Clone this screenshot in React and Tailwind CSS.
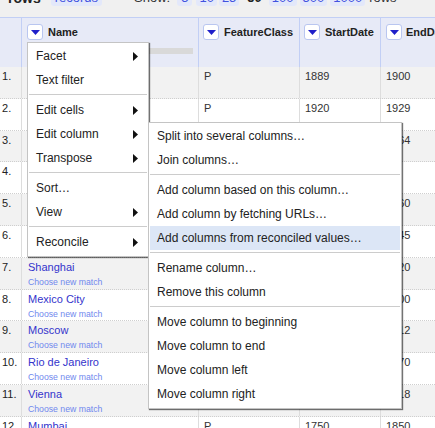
import React from "react";

const rows = [
  { name: "Tokyo", fc: "P", start: "1889", end: "1900" },
  { name: "Delhi", fc: "P", start: "1920", end: "1929" },
  { name: "Seoul", fc: "P", start: "1850", end: "1864" },
  { name: "Jakarta", fc: "P", start: "", end: "" },
  { name: "Manila", fc: "P", start: "1945", end: "1960" },
  { name: "Cairo", fc: "P", start: "1930", end: "1945" },
  { name: "Shanghai", fc: "P", start: "1900", end: "1920" },
  { name: "Mexico City", fc: "P", start: "1880", end: "1900" },
  { name: "Moscow", fc: "P", start: "1890", end: "1912" },
  { name: "Rio de Janeiro", fc: "P", start: "1950", end: "1970" },
  { name: "Vienna", fc: "P", start: "1900", end: "1918" },
  { name: "Mumbai", fc: "P", start: "1750", end: "1850" },
];

const mainMenu = [
  { label: "Facet", sub: true },
  { label: "Text filter" },
  "sep",
  { label: "Edit cells", sub: true },
  { label: "Edit column", sub: true },
  { label: "Transpose", sub: true },
  "sep",
  { label: "Sort…" },
  { label: "View", sub: true },
  "sep",
  { label: "Reconcile", sub: true },
];

const columnMenu = [
  { label: "Split into several columns…" },
  { label: "Join columns…" },
  "sep",
  { label: "Add column based on this column…" },
  { label: "Add column by fetching URLs…" },
  { label: "Add columns from reconciled values…", active: true },
  "sep",
  { label: "Rename column…" },
  { label: "Remove this column" },
  "sep",
  { label: "Move column to beginning" },
  { label: "Move column to end" },
  { label: "Move column left" },
  { label: "Move column right" },
];

const DropButton = () => (
  <span className="flex h-[16px] w-[16px] shrink-0 items-center justify-center rounded-[3px] border border-[#b9c6f0] bg-white">
    <svg width="9" height="5" viewBox="0 0 9 5">
      <polygon points="0,0 9,0 4.5,5" fill="#1f1fc9" />
    </svg>
  </span>
);

const Arrow = () => (
  <svg width="5" height="9" viewBox="0 0 5 9" className="mr-[9px]">
    <polygon points="0,0 5,4.5 0,9" fill="#111" />
  </svg>
);

const Menu = ({ items, className }) => (
  <div
    className={`absolute border border-[#c4c4c4] bg-white px-px pb-[2px] pt-px shadow-[1px_1px_1px_rgba(0,0,0,0.55)] ${className}`}
  >
    {items.map((item, i) =>
      item === "sep" ? (
        <div key={i} className="mb-[3px] mt-[2px] h-px bg-[#cccccc]" />
      ) : (
        <div
          key={i}
          className={`flex h-[24px] items-center justify-between pl-[7px] text-[12px] text-[#222] ${
            item.active ? "bg-[#dce6f6]" : ""
          }`}
        >
          <span>{item.label}</span>
          {item.sub && <Arrow />}
        </div>
      )
    )}
  </div>
);

const Badge = ({ children, className = "" }) => (
  <span className={`rounded-[3px] bg-[#e3e8fa] px-[3px] text-[#4152e0] ${className}`}>
    {children}
  </span>
);

export default function App() {
  return (
    <div
      className="relative h-[428px] w-[435px] overflow-hidden bg-white text-[#333]"
      style={{ fontFamily: '"Liberation Sans", Arial, sans-serif' }}
    >
      {/* summary bar */}
      <div className="h-[18px] overflow-hidden border-b border-[#c2cff5] bg-[#f0f0f0]">
        <div className="-mt-[10px] flex items-center whitespace-nowrap text-[13px] leading-[16px]">
          <span className="ml-[8px] text-[14px] font-bold text-[#222]">rows</span>
          <Badge className="ml-[10px] px-[4px]">records</Badge>
          <span className="ml-[32px] text-[#333]">Show:</span>
          <Badge className="ml-[7px] px-[4px]">5</Badge>
          <Badge className="ml-[4px]">10</Badge>
          <Badge className="ml-[2px]">25</Badge>
          <span className="ml-[5px] px-[3px] font-bold text-[#222]">50</span>
          <Badge className="ml-[4px]">100</Badge>
          <Badge className="ml-[3px]">500</Badge>
          <Badge className="ml-[3px]">1000</Badge>
          <span className="ml-[4px]">rows</span>
        </div>
      </div>

      {/* header */}
      <div className="flex h-[49px] bg-[#e7eaf7] text-[11px] font-bold text-[#222]">
        <div className="w-[21px] shrink-0" />
        <div className="flex w-[177px] shrink-0 flex-col border-l border-[#c2cff5] pl-[5px] pt-[6px]">
          <div className="flex items-center gap-[5px]">
            <DropButton />
            <span>Name</span>
          </div>
          <div className="mr-[5px] mt-[7px] h-[6px] bg-[#d9d9d9]" />
        </div>
        <div className="flex w-[101px] shrink-0 items-start gap-[5px] border-l border-[#c2cff5] pl-[4px] pt-[6px]">
          <DropButton />
          <span className="leading-[16px]">FeatureClass</span>
        </div>
        <div className="flex w-[81px] shrink-0 items-start gap-[5px] border-l border-[#c2cff5] pl-[4px] pt-[6px]">
          <DropButton />
          <span className="leading-[16px]">StartDate</span>
        </div>
        <div className="flex w-[80px] shrink-0 items-start gap-[4px] border-l border-[#c2cff5] pl-[5px] pt-[6px]">
          <DropButton />
          <span className="leading-[16px]">EndDate</span>
        </div>
      </div>

      {/* rows */}
      <div className="text-[11px] leading-[14px]">
        {rows.map((r, i) => (
          <div
            key={i}
            className={`flex h-[31.8px] border-b border-dotted border-[#cfcfcf] ${
              i % 2 === 0 ? "bg-[#f2f2f2]" : "bg-white"
            }`}
          >
            <div className="w-[21px] shrink-0 pl-[2px] pt-[2px] text-[#222]">{i + 1}.</div>
            <div className="w-[177px] shrink-0 border-l border-[#dddddd] pl-[6px] pt-[2px]">
              <div className="text-[#3434cc]">{r.name}</div>
              <div className="mt-px text-[8.7px] leading-[14px] text-[#7088ee]">
                Choose new match
              </div>
            </div>
            <div className="w-[101px] shrink-0 border-l border-[#dddddd] pl-[5px] pt-[2px]">
              {r.fc}
            </div>
            <div className="w-[81px] shrink-0 border-l border-[#dddddd] pl-[5px] pt-[2px]">
              {r.start}
            </div>
            <div className="w-[80px] shrink-0 border-l border-[#dddddd] pl-[5px] pt-[2px]">
              {r.end}
            </div>
          </div>
        ))}
      </div>

      <Menu items={mainMenu} className="left-[27px] top-[42px] w-[122px]" />
      <Menu items={columnMenu} className="left-[148px] top-[122px] w-[254px]" />
    </div>
  );
}
